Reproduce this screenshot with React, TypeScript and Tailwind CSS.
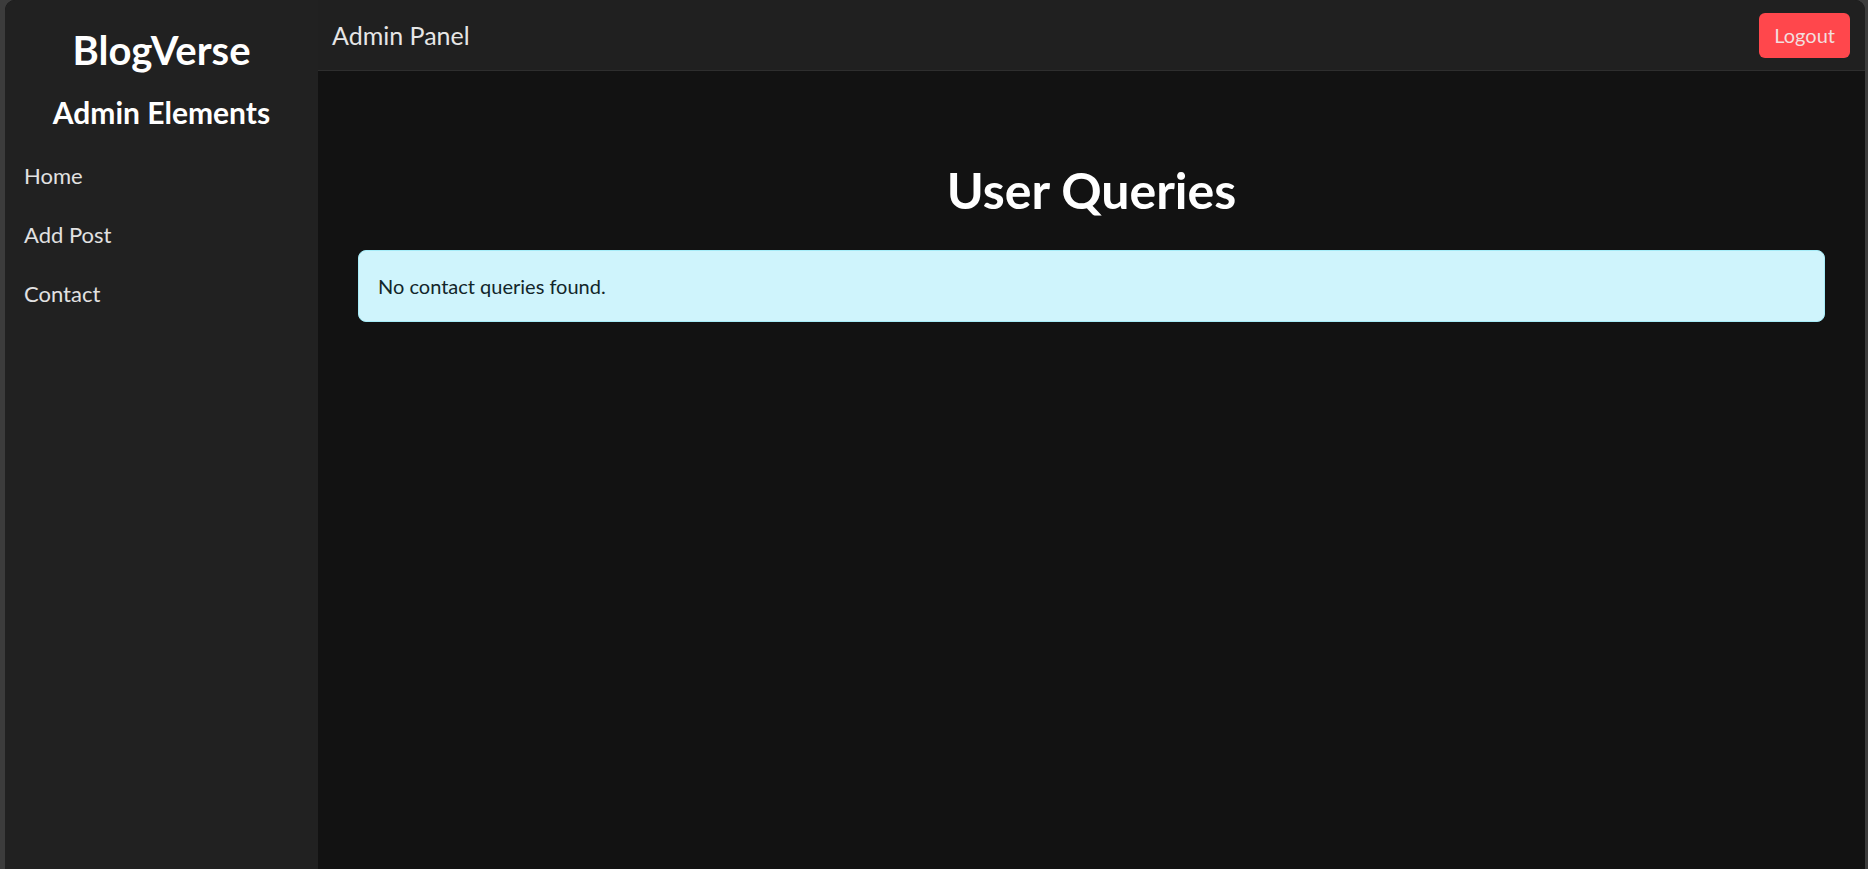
export default function App() {
  const links = ['Home', 'Add Post', 'Contact'];
  return (
    <div className="h-screen w-full bg-[#3c3c3c] pl-[5px] pr-[3px] font-['Lato','Noto_Sans',sans-serif]">
      <div className="flex h-full overflow-hidden rounded-t-[10px] bg-[#121212]">
        <aside className="flex w-[313px] shrink-0 flex-col bg-[#212121] pt-[26px]">
          <h2 className="text-center text-[40px] font-bold leading-[48px] text-white">BlogVerse</h2>
          <h4 className="mt-[21px] text-center text-[30px] font-bold leading-[34px] text-white">Admin Elements</h4>
          <nav className="mt-[17px] flex flex-col px-[19px]">
            {links.map((l) => (
              <a key={l} href="#" className="py-[15px] text-[22px] leading-[29px] text-[#e2e2e2]">
                {l}
              </a>
            ))}
          </nav>
        </aside>
        <div className="flex min-w-0 flex-1 flex-col">
          <header className="flex h-[71px] items-center justify-between border-b border-[#2e2e2e] bg-[#202020] pl-[14px] pr-[15px]">
            <span className="text-[25px] leading-[30px] text-[#e6e6e6]">Admin Panel</span>
            <button className="h-[45px] rounded-[6px] bg-[#ff474c] px-[15px] text-[20px] leading-[24px] text-[#f3dede]">
              Logout
            </button>
          </header>
          <main className="flex-1 px-[40px] pt-[90px]">
            <h1 className="text-center text-[50px] font-bold leading-[58px] text-white">User Queries</h1>
            <div className="mt-[31px] rounded-[8px] border border-[#a6ecf8] bg-[#cff4fc] px-[19px] py-[21px] text-[20px] leading-[28px] text-[#12262a]">
              No contact queries found.
            </div>
          </main>
        </div>
      </div>
    </div>
  );
}
